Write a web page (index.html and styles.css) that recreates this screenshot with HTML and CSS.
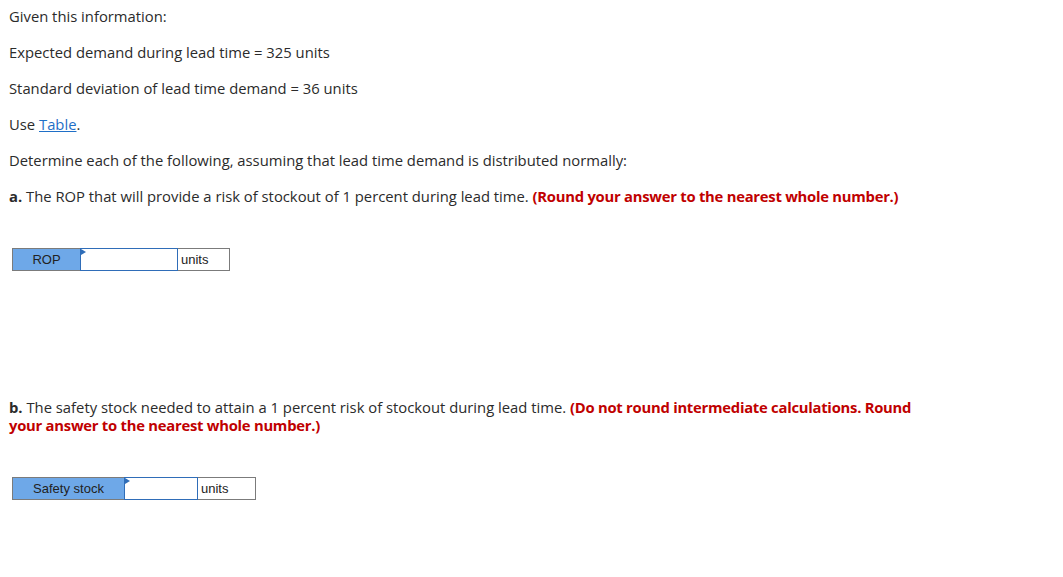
FILE: index.html
```html
<!DOCTYPE html>
<html>
<head>
<meta charset="utf-8">
<link rel="stylesheet" href="styles.css">
</head>
<body>
<div class="question">
  <p>Given this information:</p>
  <p>Expected demand during lead time = 325 units</p>
  <p>Standard deviation of lead time demand = 36 units</p>
  <p>Use <a class="link" href="#">Table</a>.</p>
  <p>Determine each of the following, assuming that lead time demand is distributed normally:</p>
  <p><b>a.</b> The ROP that will provide a risk of stockout of 1 percent during lead time. <span class="hint">(Round your answer to the nearest whole number.)</span></p>
  <div class="answer answer-a">
    <div class="label label-rop">ROP</div>
    <div class="input input-rop"><span class="flag"></span></div>
    <div class="unit unit-rop">units</div>
  </div>
  <p class="part-b"><b>b.</b> The safety stock needed to attain a 1 percent risk of stockout during lead time. <span class="hint">(Do not round intermediate calculations. Round</span> <span class="hint">your answer to the nearest whole number.)</span></p>
  <div class="answer answer-b">
    <div class="label label-ss">Safety stock</div>
    <div class="input input-ss"><span class="flag"></span></div>
    <div class="unit unit-ss">units</div>
  </div>
</div>
</body>
</html>
```
FILE: styles.css
```css
html, body {
  margin: 0;
  padding: 0;
  background: #fff;
}
body {
  padding: 7px 9px;
  font-family: "Open Sans", "Liberation Sans", sans-serif;
  font-size: 14.8px;
  line-height: 18px;
  color: #2b2b2b;
}
.question {
  width: 920px;
}
p {
  margin: 0 0 18px 0;
}
b {
  font-weight: 700;
}
.link {
  color: #1f6fc7;
  text-decoration: underline;
}
.hint {
  color: #c00000;
  font-weight: 700;
  letter-spacing: -0.25px;
}
.answer {
  display: flex;
  margin: 43px 0 0 3px;
  height: 23px;
  font-family: "Liberation Sans", Arial, sans-serif;
  font-size: 13px;
  line-height: 21px;
  color: #222;
}
.answer-a {
  margin-bottom: 127px;
}
.label {
  box-sizing: border-box;
  background: #6ea8e8;
  border: 1px solid #7b7b7b;
  border-right: none;
  text-align: center;
}
.label-rop { width: 68px; }
.label-ss { width: 112px; }
.input {
  position: relative;
  box-sizing: border-box;
  border: 1px solid #2f6db8;
  background: #fff;
}
.input-rop { width: 98px; }
.input-ss { width: 74px; }
.flag {
  position: absolute;
  left: 0;
  top: 0;
  width: 0;
  height: 0;
  border-top: 3px solid transparent;
  border-bottom: 3px solid transparent;
  border-left: 5px solid #2f6db8;
}
.unit {
  box-sizing: border-box;
  border: 1px solid #7b7b7b;
  border-left: none;
  padding-left: 3px;
  background: #fff;
}
.unit-rop { width: 52px; }
.unit-ss { width: 58px; }
.part-b {
  margin-bottom: 0;
}
.answer-b {
  margin-top: 43px;
}
```
